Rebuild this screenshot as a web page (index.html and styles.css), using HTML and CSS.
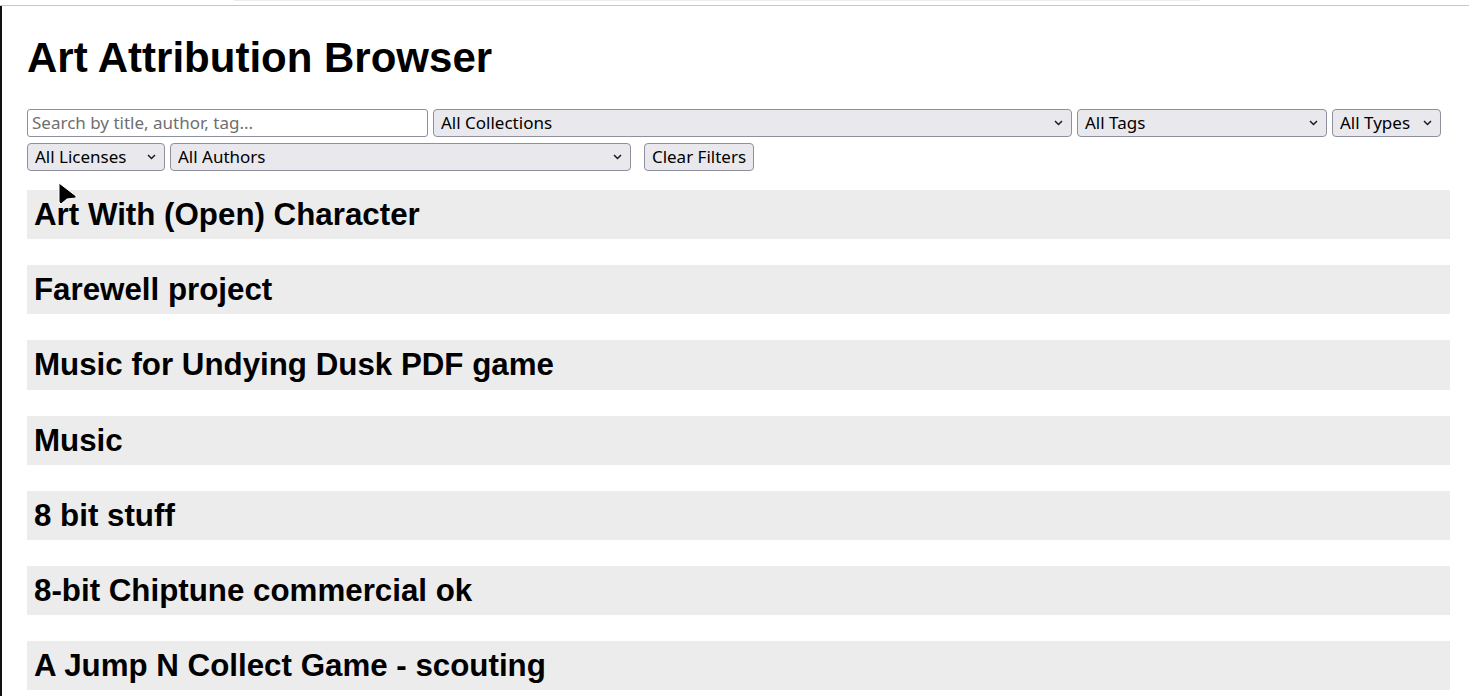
FILE: index.html
```html
<!DOCTYPE html>
<html lang="en">
<head>
<meta charset="utf-8">
<title>Art Attribution Browser</title>
<link rel="stylesheet" href="styles.css">
</head>
<body>
<div class="topbar"><div class="topbar-tab"></div></div>
<div class="frame">
  <main class="page">
    <h1 class="title">Art Attribution Browser</h1>
    <div class="filters">
      <input class="search" type="text" placeholder="Search by title, author, tag...">
      <label class="select-wrap w-collections">
        <select class="select"><option>All Collections</option></select>
        <svg class="chev" width="9" height="6" viewBox="0 0 9 6"><path d="M1 1 L4.5 4.5 L8 1" fill="none" stroke="#1b1b1b" stroke-width="1.5"/></svg>
      </label>
      <label class="select-wrap w-tags">
        <select class="select"><option>All Tags</option></select>
        <svg class="chev" width="9" height="6" viewBox="0 0 9 6"><path d="M1 1 L4.5 4.5 L8 1" fill="none" stroke="#1b1b1b" stroke-width="1.5"/></svg>
      </label>
      <label class="select-wrap w-types">
        <select class="select"><option>All Types</option></select>
        <svg class="chev" width="9" height="6" viewBox="0 0 9 6"><path d="M1 1 L4.5 4.5 L8 1" fill="none" stroke="#1b1b1b" stroke-width="1.5"/></svg>
      </label>
      <label class="select-wrap w-licenses">
        <select class="select"><option>All Licenses</option></select>
        <svg class="chev" width="9" height="6" viewBox="0 0 9 6"><path d="M1 1 L4.5 4.5 L8 1" fill="none" stroke="#1b1b1b" stroke-width="1.5"/></svg>
      </label>
      <label class="select-wrap w-authors">
        <select class="select"><option>All Authors</option></select>
        <svg class="chev" width="9" height="6" viewBox="0 0 9 6"><path d="M1 1 L4.5 4.5 L8 1" fill="none" stroke="#1b1b1b" stroke-width="1.5"/></svg>
      </label>
      <button class="clear" type="button">Clear Filters</button>
    </div>
    <section class="collections">
      <div class="collection"><h2 class="collection-title">Art With (Open) Character</h2></div>
      <div class="collection"><h2 class="collection-title">Farewell project</h2></div>
      <div class="collection"><h2 class="collection-title">Music for Undying Dusk PDF game</h2></div>
      <div class="collection"><h2 class="collection-title">Music</h2></div>
      <div class="collection"><h2 class="collection-title">8 bit stuff</h2></div>
      <div class="collection"><h2 class="collection-title">8-bit Chiptune commercial ok</h2></div>
      <div class="collection"><h2 class="collection-title">A Jump N Collect Game - scouting</h2></div>
    </section>
  </main>
  <svg class="cursor" width="20" height="24" viewBox="0 0 20 24"><path d="M1 1 L1 20 L3 22 L9 17 L18 16 L18 14 Z" fill="#000" stroke="#fff" stroke-width="1"/></svg>
</div>
</body>
</html>
```
FILE: styles.css
```css
html, body {
  margin: 0;
  padding: 0;
  background: #fff;
}
body {
  font-family: "Liberation Sans", Arial, sans-serif;
  color: #000;
  overflow: hidden;
  height: 696px;
}
.topbar {
  height: 5px;
  border-bottom: 1px solid #c8c8c8;
}
.topbar-tab {
  margin-left: 234px;
  width: 966px;
  height: 1px;
  background: #ececec;
}
.frame {
  border-left: 2px solid #111;
  position: relative;
  padding-top: 28px;
  min-height: 700px;
}
.page {
  padding: 0 19px 0 25px;
}
.title {
  font-size: 42px;
  line-height: 48px;
  font-weight: bold;
  margin: 0 0 27px;
}
.filters {
  display: flex;
  flex-wrap: wrap;
  column-gap: 5px;
  row-gap: 6px;
  font-family: "Noto Sans", "Open Sans", sans-serif;
  font-size: 17px;
}
.search {
  width: 401px;
  height: 28px;
  box-sizing: border-box;
  border: 1px solid #8f8f9d;
  border-radius: 3px;
  padding: 0 4px 1px;
  font: inherit;
  color: #000;
  background: #fff;
}
.search::placeholder {
  color: #6f6f6f;
}
.select-wrap {
  position: relative;
  display: block;
  height: 28px;
}
.select {
  -webkit-appearance: none;
  appearance: none;
  width: 100%;
  height: 28px;
  box-sizing: border-box;
  border: 1px solid #8f8f9d;
  border-radius: 4px;
  background: #e9e9ed;
  font: inherit;
  color: #000;
  padding: 0 20px 2px 7px;
  margin: 0;
}
.chev {
  position: absolute;
  right: 9px;
  top: 11px;
  pointer-events: none;
}
.w-collections { width: 639px; }
.w-tags { width: 250px; }
.w-types { width: 109px; }
.w-licenses { width: 138px; }
.w-authors { width: 461px; }
.clear {
  margin-left: 8px;
  width: 110px;
  height: 28px;
  box-sizing: border-box;
  border: 1px solid #8f8f9d;
  border-radius: 4px;
  background: #e9e9ed;
  font: inherit;
  color: #000;
  padding: 0 6px 2px;
}
.collections {
  margin-top: 19px;
}
.collection {
  margin-bottom: 26px;
}
.collection-title {
  margin: 0;
  background: #ececec;
  font-size: 31.3px;
  line-height: 33.17px;
  font-weight: bold;
  padding: 8px 7px;
}
.cursor {
  position: absolute;
  left: 56px;
  top: 176px;
}
```
